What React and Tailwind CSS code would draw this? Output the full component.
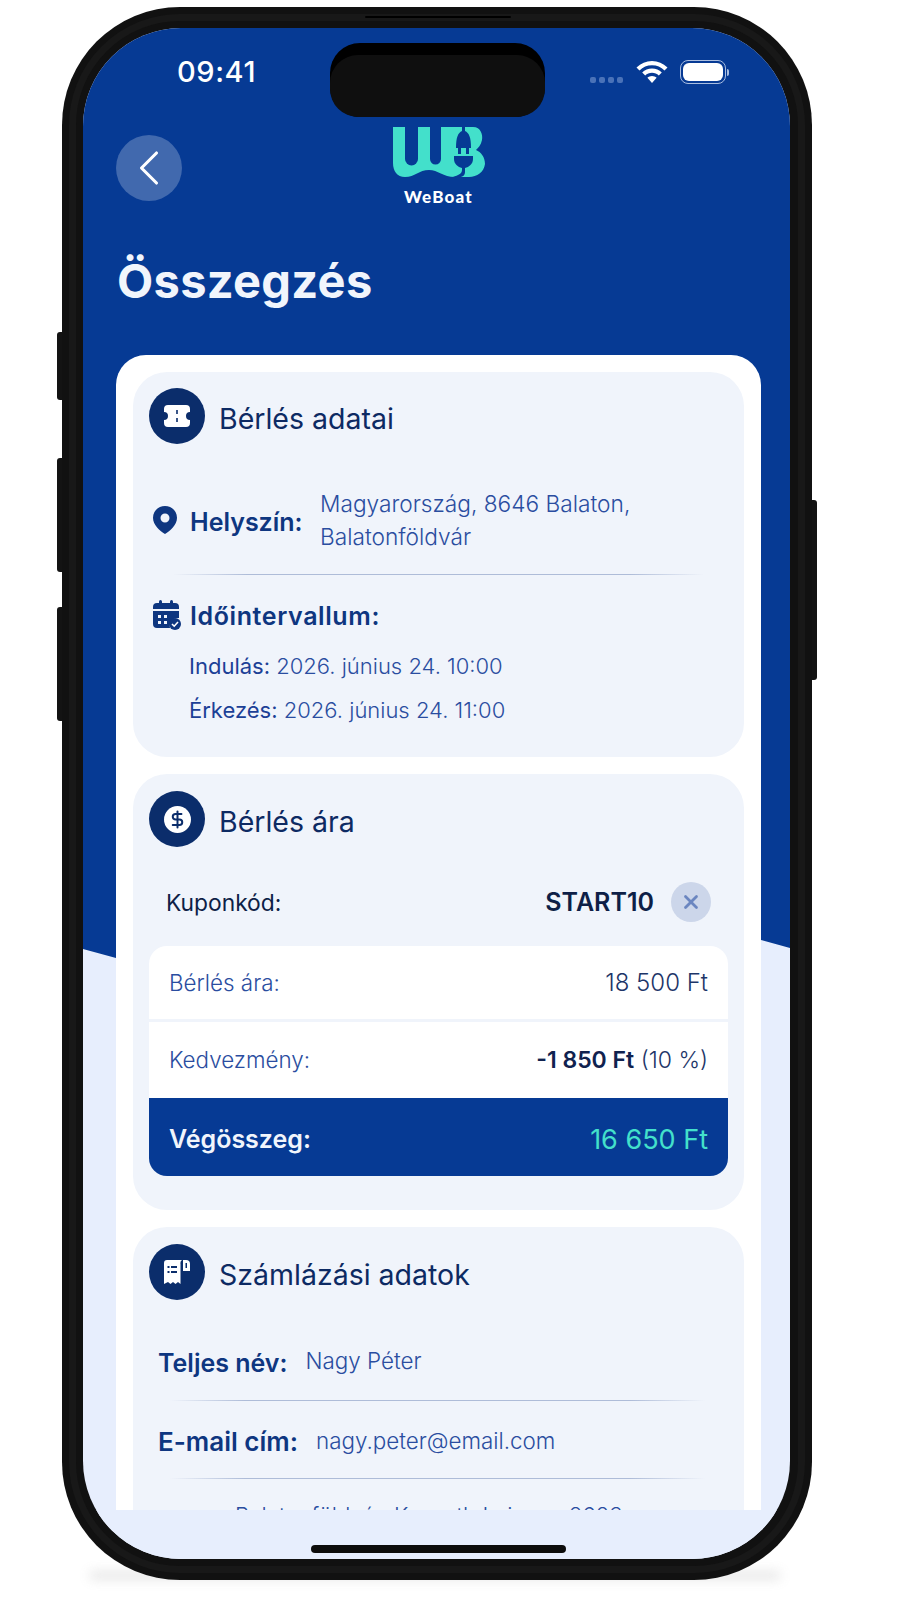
import React from 'react';
import { ChevronLeft, X, DollarSign } from 'lucide-react';

const Divider = ({ className = '' }) => (
  <div className={`h-px bg-[linear-gradient(90deg,transparent,#aebcd8_14%,#aebcd8_86%,transparent)] ${className}`} />
);

const TicketIcon = () => (
  <svg viewBox="0 0 28 24" className="w-[28px] h-[24px]" fill="#fff">
    <path d="M5 1h18a4 4 0 0 1 4 4v3a4 4 0 0 0 0 8v3a4 4 0 0 1-4 4H5a4 4 0 0 1-4-4v-3a4 4 0 0 0 0-8V5a4 4 0 0 1 4-4z" />
    <rect x="13.200" y="6" width="1.600" height="4" fill="#0b2d6b" />
    <rect x="13.200" y="14" width="1.600" height="4" fill="#0b2d6b" />
  </svg>
);

const ReceiptIcon = () => (
  <svg viewBox="0 0 28 28" className="w-[28px] h-[28px]" fill="#fff">
    <path d="M1 5a3 3 0 0 1 3-3h15a4 4 0 0 0-1.500 4v20l-2.500-2-2.500 2-2.500-2-2.500 2-2.500-2L1 26z" />
    <path d="M20 2h3a4 4 0 0 1 4 4v7h-7z" />
    <rect x="22.500" y="5" width="1.500" height="5" fill="#0b2d6b" />
    <rect x="4.500" y="8" width="2" height="2" fill="#0b2d6b" />
    <rect x="8" y="8" width="6" height="2" fill="#0b2d6b" />
    <rect x="4.500" y="13" width="2" height="2" fill="#0b2d6b" />
    <rect x="8" y="13" width="6" height="2" fill="#0b2d6b" />
  </svg>
);

const SectionTitle = ({ icon, gap = 'gap-[14px]', children }) => (
  <div className={`flex items-center ${gap}`}>
    <div className="w-[56px] h-[56px] rounded-full bg-[#0b2d6b] flex items-center justify-center shrink-0">{icon}</div>
    <h2 className="pt-[6px] text-[28.5px] leading-[36px] text-[#0d2a63]">{children}</h2>
  </div>
);

const Logo = () => (
  <div className="flex flex-col items-center ml-[4px]">
    <svg viewBox="0 0 92 52" className="w-[92px] h-[52px] shrink-0">
      <path
        fill="#43e0cb"
        d="M0 0H80C88 0 90 8 89 13 88 18 85 21 83 23 88 25 92 30 92 37 91 45 84 50 76 50H62C50 50 45 43 36 43 26 43 22 50 12 50 4 50 0 44 0 36Z"
      />
      <path fill="#063a94" d="M12 0H25V32A6.500 6.500 0 0 1 12 32Z" />
      <path fill="#063a94" d="M37 0H48V32A5.500 5.500 0 0 1 37 32Z" />
      <path fill="#063a94" d="M69 0H72V4C76 6 78 10 78 21H63C63 10 65 6 69 4Z" />
      <path fill="#063a94" d="M65 21H68V27H65ZM73 21H76V27H73Z" />
      <path fill="#063a94" d="M61 29H80V32C80 37 76 40 72 41V45C72 48 70 50 66 50H60C65 48 69 47 69 43V41C65 40 61 37 61 32Z" />
    </svg>
    <span className="mt-[9px] shrink-0 text-[17px] leading-[18px] font-black text-white font-['Lato',sans-serif] tracking-[1.200px]">WeBoat</span>
  </div>
);

const Row = ({ label, children, className = '' }) => (
  <div className={`flex items-center justify-between pl-[20px] pr-[20px] bg-white ${className}`}>
    <span className="text-[22.4px] text-[#2a4da0] font-light">{label}</span>
    {children}
  </div>
);

export default function App() {
  return (
    <div className="relative w-[900px] h-[1600px] bg-white overflow-hidden font-['Inter',sans-serif]">
      {/* shadow under the phone */}
      <div className="absolute left-[90px] right-[120px] top-[1572px] h-[7px] bg-[#9a9a9a] blur-[6px] opacity-30" />

      <div className="relative ml-[62px] mt-[7px] w-[750px] h-[1573px] bg-[#111111] rounded-[118px] p-[21px]">
        {/* side buttons */}
        <div className="absolute left-[-5px] top-[325px] w-[5px] h-[68px] bg-[#131313] rounded-l-[3px]" />
        <div className="absolute left-[-5px] top-[451px] w-[5px] h-[114px] bg-[#131313] rounded-l-[3px]" />
        <div className="absolute left-[-5px] top-[600px] w-[5px] h-[114px] bg-[#131313] rounded-l-[3px]" />
        <div className="absolute right-[-5px] top-[493px] w-[5px] h-[180px] bg-[#131313] rounded-r-[3px]" />
        {/* frame bevel and speaker slit */}
        <div className="absolute inset-[7px] rounded-[111px] border-[7px] border-[#181818]" />
        <div className="absolute left-[303px] top-[9px] w-[146px] h-[2px] rounded-full bg-black" />

        <div className="relative w-[707px] h-[1531px] rounded-[98px] overflow-hidden bg-[#e7eefd] flex flex-col">
          {/* blue backdrop with the slanted edge */}
          <div className="absolute inset-x-0 top-0 h-[940px] bg-[#063a94] [clip-path:polygon(0_0,100%_0,100%_920px,678px_912px,354px_935px,33px_930px,0_921px)]" />

          {/* dynamic island */}
          <div className="absolute left-[247px] top-[15px] w-[215px] h-[74px] rounded-[30px] bg-black pt-[12px]">
            <div className="w-full h-full rounded-[28px] bg-[#0f0f0f]" />
          </div>

          <div className="relative flex items-center justify-between h-[40px] mt-[24px] pl-[94px] pr-[61px]">
            <span className="text-[29px] font-medium text-white tracking-[0.6px]">09:41</span>
            <div className="flex items-center gap-[12px]">
              <div className="flex gap-[3px] mt-[16px] mr-[1px]">
                {[0, 1, 2, 3].map((i) => (
                  <span key={i} className="w-[6px] h-[6px] rounded-[2px] bg-[#4a72b8]" />
                ))}
              </div>
              <svg viewBox="0 0 32 24" className="w-[32px] h-[24px]" fill="#fff">
                <path d="M16 1C10 1 5 3.400 0.500 7.500l3 3C7 7 11 5.200 16 5.200S25 7 28.500 10.500l3-3C27 3.400 22 1 16 1z" />
                <path d="M16 8.500c-3.800 0-7.200 1.500-9.800 4l3 3c1.800-1.700 4.100-2.700 6.800-2.700s5 1 6.800 2.700l3-3c-2.600-2.500-6-4-9.800-4z" />
                <path d="M16 16c-1.800 0-3.400.7-4.600 1.800L16 23l4.600-5.200C19.400 16.700 17.800 16 16 16z" />
              </svg>
              <div className="flex items-center gap-[1px]">
                <div className="w-[46px] h-[24px] rounded-[8px] border border-[#a9bde0] p-[2px]">
                  <div className="w-full h-full rounded-[6px] bg-white" />
                </div>
                <span className="w-[2px] h-[7px] rounded-r-[2px] bg-[#a9bde0]" />
              </div>
            </div>
          </div>

          <div className="relative h-[75px] mt-[35px] mx-[33px] flex justify-center">
            <div className="absolute left-0 top-[8px] w-[66px] h-[66px] rounded-full bg-[#4169ae] flex items-center justify-center">
              <ChevronLeft className="w-[60px] h-[60px] text-white" strokeWidth={1.250} />
            </div>
            <Logo />
          </div>

          <h1 className="relative mt-[51px] ml-[34px] text-[47px] leading-[56px] font-bold tracking-[0.3px] text-[#f1f5fc]">
            Összegzés
          </h1>

          <div className="relative flex-1 min-h-0 ml-[33px] mr-[29px] mt-[46px] bg-white rounded-t-[30px] overflow-hidden px-[17px] pt-[17px] flex flex-col gap-[17px]">
            {/* rental details */}
            <section className="h-[385px] shrink-0 bg-[#f0f4fb] rounded-[34px] pt-[16px] px-[16px]">
              <SectionTitle icon={<TicketIcon />}>Bérlés adatai</SectionTitle>
              <div className="flex items-center mt-[43px] ml-[4px]">
                <svg viewBox="0 0 24 28" className="w-[24px] h-[28px] shrink-0" fill="#0e3680">
                  <path fillRule="evenodd" d="M12 0C5.400 0 0 5.200 0 11.700 0 19 7 25 12 28c5-3 12-9 12-16.300C24 5.200 18.600 0 12 0zm0 7.500a4.500 4.500 0 1 1 0 9 4.500 4.500 0 0 1 0-9z" />
                </svg>
                <span className="ml-[13px] pt-[6px] text-[25px] font-semibold text-[#0e3680] w-[130px] shrink-0">Helyszín:</span>
                <p className="text-[22.7px] leading-[33px] font-light text-[#2a4da0]">
                  Magyarország, 8646 Balaton,<br />Balatonföldvár
                </p>
              </div>
              <Divider className="mt-[21px] mx-[24px]" />
              <div className="flex items-center h-[32px] mt-[24px] ml-[4px]">
                <svg viewBox="0 0 28 30" className="w-[28px] h-[30px] shrink-0" fill="#0e3680">
                  <rect x="6" y="0" width="3" height="6" rx="1.500" />
                  <rect x="17" y="0" width="3" height="6" rx="1.500" />
                  <path d="M0 7a4 4 0 0 1 4-4h18a4 4 0 0 1 4 4v2H0z" />
                  <path fillRule="evenodd" d="M0 11h26v7a8 8 0 0 0-9 10H4a4 4 0 0 1-4-4zm5 4v3h3v-3zm6 0v3h3v-3zm-6 6v3h3v-3zm6 0v3h3v-3z" />
                  <circle cx="22" cy="24" r="6" />
                  <path d="M19 24l2.200 2.200L25 22" stroke="#fff" strokeWidth="1.600" fill="none" />
                </svg>
                <span className="ml-[9px] pt-[3px] text-[25px] tracking-[0.6px] font-semibold text-[#0e3680]">Időintervallum:</span>
              </div>
              <div className="ml-[40px] mt-[19px] flex flex-col gap-[11px] text-[22px] leading-[33px] text-[#2a4da0] font-light">
                <p><span className="font-normal text-[#1c4096]">Indulás:</span> 2026. június 24. 10:00</p>
                <p><span className="font-normal text-[#1c4096]">Érkezés:</span> 2026. június 24. 11:00</p>
              </div>
            </section>

            {/* rental price */}
            <section className="h-[436px] shrink-0 bg-[#f0f4fb] rounded-[34px] pt-[17px] px-[16px]">
              <SectionTitle icon={
                <div className="w-[27px] h-[27px] rounded-full bg-white flex items-center justify-center">
                  <DollarSign className="w-[19px] h-[19px] text-[#0b2d6b]" strokeWidth={2.500} />
                </div>
              }>Bérlés ára</SectionTitle>
              <div className="flex items-center h-[40px] mt-[35px] ml-[17px] mr-[17px]">
                <span className="pt-[2px] text-[22.8px] text-[#0e1f47]">Kuponkód:</span>
                <span className="pt-[2px] ml-auto text-[25px] font-semibold text-[#0e1f47]">START10</span>
                <div className="ml-[17px] w-[40px] h-[40px] rounded-full bg-[#ccd6ea] flex items-center justify-center">
                  <X className="w-[22px] h-[22px] text-[#6b86c0]" strokeWidth={3} />
                </div>
              </div>
              <div className="mt-[24px] rounded-[18px] overflow-hidden flex flex-col">
                <Row label="Bérlés ára:" className="h-[73px] mb-[3px]">
                  <span className="text-[24px] font-light text-[#1d3568]">18 500 Ft</span>
                </Row>
                <Row label="Kedvezmény:" className="h-[76px]">
                  <span className="text-[23px] font-light text-[#1d3568]"><span className="font-semibold text-[#10224f]">-1 850 Ft</span> (10 %)</span>
                </Row>
                <div className="flex items-center justify-between h-[78px] pl-[20px] pr-[20px] pt-[6px] bg-[#063a94]">
                  <span className="text-[25px] font-semibold text-[#f1f5fc]">Végösszeg:</span>
                  <span className="text-[27px] font-normal text-[#43e0cb]">16 650 Ft</span>
                </div>
              </div>
            </section>

            {/* billing details */}
            <section className="shrink-0 bg-[#f0f4fb] rounded-t-[34px] pt-[17px] px-[16px] pb-[40px]">
              <SectionTitle icon={<ReceiptIcon />}>Számlázási adatok</SectionTitle>
              <div className="flex items-center h-[32px] mt-[46px] ml-[9px] gap-[18px]">
                <span className="pt-[3px] text-[25px] font-semibold text-[#0e3680]">Teljes név:</span>
                <span className="text-[22.4px] font-light text-[#2a4da0] -mt-[2px]">Nagy Péter</span>
              </div>
              <Divider className="mt-[22px] ml-[21px] mr-[23px]" />
              <div className="flex items-center h-[32px] mt-[24px] ml-[9px] gap-[18px]">
                <span className="text-[26px] font-semibold text-[#0e3680]">E-mail cím:</span>
                <span className="text-[22.4px] font-light text-[#2a4da0]">nagy.peter@email.com</span>
              </div>
              <Divider className="mt-[21px] ml-[21px] mr-[23px]" />
              <p className="mt-[20px] ml-[86px] text-[22.2px] leading-[33px] font-light text-[#2a4da0]">Balatonföldvár, Kossuth Lajos u. 8623</p>
            </section>
          </div>

          <div className="relative h-[49px] shrink-0 bg-[#e7eefd] flex justify-center pt-[35px]">
            <div className="ml-[4px] w-[255px] h-[8px] rounded-full bg-[#0c0c0c]" />
          </div>
        </div>
      </div>
    </div>
  );
}
